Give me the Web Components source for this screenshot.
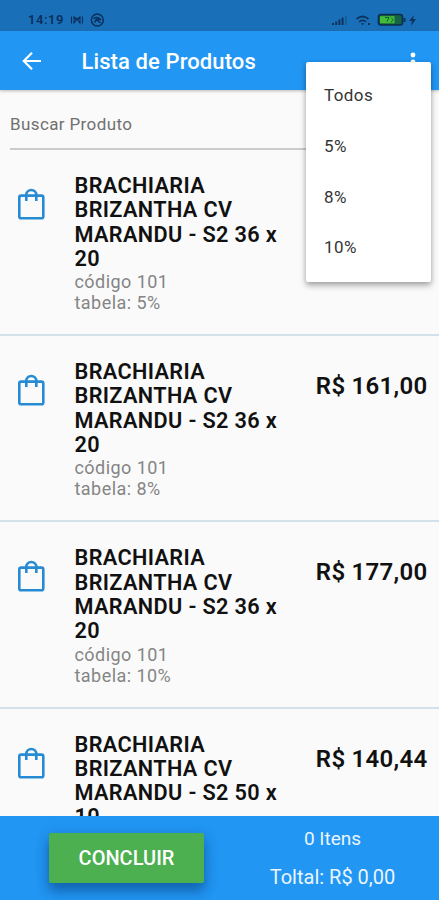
<!DOCTYPE html>
<html lang="pt-BR">
<head>
<meta charset="utf-8">
<title>Lista de Produtos</title>
<style>
html, body { margin: 0; height: 100%; overflow: hidden; }
body { font-family: Roboto, "Liberation Sans", sans-serif; background: #fafafa; }
</style>
</head>
<body>
<product-screen></product-screen>
<script>
const define = (name, html) => {
  customElements.define(name, class extends HTMLElement {
    constructor() {
      super();
      const t = document.createElement('template');
      t.innerHTML = html;
      this.attachShadow({ mode: 'open' }).appendChild(t.content.cloneNode(true));
    }
  });
};

define('status-bar', `
<style>
:host { display: flex; box-sizing: border-box; height: 31px; padding: 8px 20px 0 28px; background: #1a70b8; color: #0b2f5c; align-items: center; justify-content: space-between; }
div { display: flex; align-items: center; }
.time { font-size: 13px; font-weight: 600; letter-spacing: .55px; line-height: 15px; width: 42px; }
svg { display: block; }
</style>
<div><span class="time">14:19</span>
<svg width="36" height="16" viewBox="0 0 36 16" fill="none" stroke="#0b2f5c" stroke-width="1.1">
<path d="M1.500 4.500v7M12.500 4.500v7M4 5l2.200 3L4 11zM10 5L7.800 8 10 11zM4 5l3 2 3-2"/>
<circle cx="27.300" cy="8" r="6" stroke-width="1.500"/><path d="M23.500 7c2-2.500 5.500-2 7.500 1M24.500 10.500l2-3 4 3.500M26.500 7.500h3" stroke-width="1.500"/></svg></div>
<svg width="88" height="16" viewBox="0 0 88 16" fill="#0f335f">
<path d="M1 11h2v2H1zM4.200 9.500h2V13h-2zM7.400 7.500h2V13h-2zM10.600 5.500h2V13h-2z"/><path d="M14.500 4.500h1V13h-1z" opacity=".6"/>
<g fill="none" stroke="#0f335f" stroke-width="1.700"><path d="M25.500 7q6-5 12 0M28 9.800q3.500-3 7 0"/></g><path d="M29.800 11.500q1.700-1.200 3.400 0l-1.700 1.800zM37 11h2v2h-2z"/>
<rect x="47.500" y="2.500" width="24" height="10.500" rx="2.500" fill="#176247" stroke="#0b2d4e" stroke-width="1.600"/><rect x="49" y="4.200" width="14.500" height="7.100" fill="#42bd38"/><path d="M72.500 6h2v4h-2zM83 3l-5 6h3l-1 5 5-7h-3z"/><path d="M54 5.500h4l-2 4M60 5.500l2 2-2 3" fill="none" stroke="#145c30"/></svg>`);

define('app-bar', `
<style>
:host { display: flex; box-sizing: border-box; height: 59px; padding: 0 16px 0 20px; background: #2196f3; color: #fff; align-items: center; position: relative; z-index: 1; box-shadow: 0 1px 3px rgba(80,60,50,.35); }
h1 { margin: 0 auto 0 37.500px; font-size: 22px; line-height: 28px; font-weight: 500; letter-spacing: .1px; padding-top: 2px; }
svg { display: block; }
</style>
<svg width="24" height="24" viewBox="0 0 24 24" fill="none" stroke="#fff" stroke-width="2.200"><path d="M12 3.700L3.800 12l8.200 8.300M4 12h17"/></svg>
<h1><slot></slot></h1>
<svg width="20" height="28" viewBox="0 0 20 28" fill="#fff"><circle cx="10" cy="8" r="2.400"/><circle cx="10" cy="15" r="2.400"/><circle cx="10" cy="22" r="2.400"/></svg>`);

define('search-field', `
<style>
:host { display: block; box-sizing: border-box; height: 60px; margin: 0 10px; padding-top: 24px; border-bottom: 2px solid #cbcbcb; font-size: 17px; line-height: 20px; letter-spacing: .38px; color: #707070; }
</style><slot></slot>`);

define('product-item', `
<style>
:host { display: grid; box-sizing: border-box; height: 186.200px; grid-template-columns: 74.500px 215px 1fr; padding: 24px 11.500px 0 0; border-bottom: 2px solid #d3e2ea; }
svg { display: block; margin: 14px 0 0 17px; }
h2 { margin: 0; font-size: 21.700px; line-height: 24.300px; font-weight: 600; letter-spacing: .36px; color: #111; }
.sub { font-size: 18px; line-height: 21px; letter-spacing: .45px; color: #858585; }
.price { justify-self: end; padding-top: 12px; font-size: 24px; line-height: 28px; font-weight: 600; letter-spacing: .28px; color: #111; white-space: nowrap; }
</style>
<svg width="28" height="32" viewBox="0 0 28 32" fill="none" stroke="#278bd3" stroke-width="2.600"><rect x="2.300" y="7.600" width="24" height="22.600" rx="1.800"/><path d="M9.300 13V7a5 5 0 0 1 10 0V13"/></svg>
<div><h2><slot name="title"></slot></h2><div class="sub"><slot name="code"></slot></div><div class="sub"><slot name="table"></slot></div></div>
<div class="price"><slot name="price"></slot></div>`);

define('filter-menu', `
<style>
:host { display: flex; flex-direction: column; box-sizing: border-box; position: absolute; z-index: 3; left: 306px; top: 62px; width: 125px; height: 220px; padding: 8px 18px; background: #fff; border-radius: 2px; box-shadow: 0 4px 6px rgba(0,0,0,.25), 0 1px 5px rgba(0,0,0,.18); font-size: 17px; letter-spacing: .4px; color: #353535; }
::slotted(div) { height: 50.800px; line-height: 50.800px; }
</style><slot></slot>`);

define('green-button', `
<style>
:host { display: flex; flex: none; width: 155px; height: 50px; align-items: center; justify-content: center; background: #4caf50; color: #fff; border-radius: 2px; box-shadow: 0 8px 12px rgba(0,40,90,.38), 0 3px 16px rgba(0,40,90,.16); font-size: 20px; font-weight: 500; }
</style><slot></slot>`);

define('order-bar', `
<style>
:host { display: flex; box-sizing: border-box; height: 84px; padding: 17px 0 0 49px; background: #2196f3; align-items: flex-start; flex: none; overflow: hidden; }
.totals { display: flex; flex: none; flex-direction: column; align-items: center; width: 257px; color: #eaf5fe; font-size: 19px; line-height: 22px; gap: 16px; margin-top: -5px; }
.total { font-size: 20px; }
</style>
<green-button>CONCLUIR</green-button>
<div class="totals"><div><slot name="count"></slot></div><div class="total"><slot name="total"></slot></div></div>`);

const details = pct => `<span slot="code">código 101</span><span slot="table">tabela: ${pct}</span>`;
const item = (title, pct, price) => `<product-item><span slot="title">${title}</span>${pct ? details(pct) : ''}<span slot="price">${price}</span></product-item>`;
const name36 = 'BRACHIARIA<br>BRIZANTHA CV<br>MARANDU - S2 36 x<br>20';
const name50 = 'BRACHIARIA<br>BRIZANTHA CV<br>MARANDU - S2 50 x<br>10';

define('product-screen', `
<style>
:host { display: flex; flex-direction: column; width: 439px; height: 900px; position: relative; overflow: hidden; background: #fafafa; }
status-bar, app-bar, search-field { flex: none; }
main { flex: 1; min-height: 0; overflow: hidden; }
</style>
<status-bar></status-bar>
<app-bar>Lista de Produtos</app-bar>
<search-field>Buscar Produto</search-field>
<main>${item(name36, '5%', '')}${item(name36, '8%', 'R$ 161,00')}${item(name36, '10%', 'R$ 177,00')}${item(name50, '', 'R$ 140,44')}</main>
<order-bar><span slot="count">0 Itens</span><span slot="total">Toltal: R$ 0,00</span></order-bar>
<filter-menu><div>Todos</div><div>5%</div><div>8%</div><div>10%</div></filter-menu>`);
</script>
</body>
</html>
